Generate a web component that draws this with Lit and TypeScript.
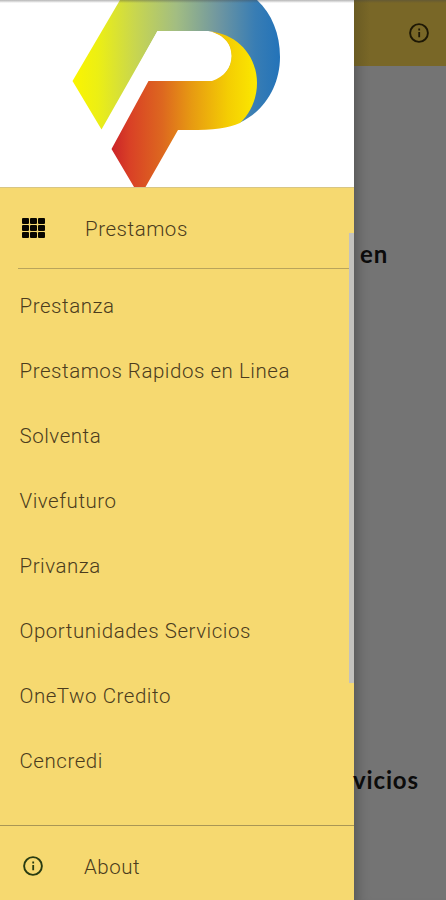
import { LitElement, html, css, svg } from "lit";
import { customElement, property } from "lit/decorators.js";

const LENDERS = [
  "Prestanza",
  "Prestamos Rapidos en Linea",
  "Solventa",
  "Vivefuturo",
  "Privanza",
  "Oportunidades Servicios",
  "OneTwo Credito",
  "Cencredi",
];

@customElement("info-icon")
export class InfoIcon extends LitElement {
  static styles = css`
    :host { display: block; width: 20px; height: 20px; }
    .icon { display: block; }
  `;
  render() {
    return html`<svg class="icon" width="20" height="20" viewBox="0 0 20 20" fill="none" stroke="currentColor">
      <circle cx="10" cy="10" r="8.9" stroke-width="1.9" />
      <path d="M10.200 9v5.2M10.200 5.6v1.9" stroke-width="1.8" />
    </svg>`;
  }
}

@customElement("brand-logo")
export class BrandLogo extends LitElement {
  static styles = css`
    :host { display: block; }
    .art { display: block; }
  `;
  render() {
    return html`<svg class="art" width="354" height="187" viewBox="0 0 354 187">
      ${svg`
      <defs>
        <linearGradient id="cool" gradientUnits="userSpaceOnUse" x1="73" y1="0" x2="280" y2="0">
          <stop offset="0" stop-color="#fbf500" />
          <stop offset="0.12" stop-color="#ecef14" />
          <stop offset="0.3" stop-color="#c8d64f" />
          <stop offset="0.5" stop-color="#a2bd82" />
          <stop offset="0.7" stop-color="#7097a0" />
          <stop offset="0.88" stop-color="#387db4" />
          <stop offset="1" stop-color="#2373b9" />
        </linearGradient>
        <linearGradient id="warm" gradientUnits="userSpaceOnUse" x1="112" y1="0" x2="257" y2="0">
          <stop offset="0" stop-color="#cb2428" />
          <stop offset="0.12" stop-color="#d94026" />
          <stop offset="0.35" stop-color="#dd681f" />
          <stop offset="0.55" stop-color="#e79a12" />
          <stop offset="0.8" stop-color="#f4cd03" />
          <stop offset="1" stop-color="#fbe900" />
        </linearGradient>
      </defs>
      <path fill="url(#cool)" d="M120 0H257C272 14 280 34 280 57C280 86 264 112 239 123L222 60L208 31H157.500L101.500 129.500L72.500 81Z" />
      <path fill="#fff" d="M157.500 31H208C223 33 232 43 232 56C232 68 223 78 212 82H148L125 90Z" />
      <path fill="url(#warm)" d="M208 31C239 34 257 57 257 83C257 98 251 113 240 123C227 129 210 130.500 178 130L145.500 187H134L111.500 149L148.500 81H212C224 77 231.500 68 231.500 56C231.500 42 222 34 208 31Z" />`}
    </svg>`;
  }
}

@customElement("drawer-menu")
export class DrawerMenu extends LitElement {
  @property({ attribute: false }) items: string[] = [];

  static styles = css`
    :host {
      display: flex;
      flex-direction: column;
      width: 354px;
      height: 900px;
      background: #f6d970;
      color: #4b3c1d;
      font: 300 20.5px/24px Roboto, sans-serif;
      letter-spacing: 0.540px;
    }
    .banner { height: 187px; background: #fff; flex: none; }
    .row { display: flex; align-items: center; box-sizing: border-box; }
    .head { height: 81px; padding: 1px 0 0 21px; border-top: 1px solid #d8c684; }
    .about { height: 75px; padding: 7px 0 0 23px; border-top: 1px solid #a99655; }
    .about info-icon { color: #293c12; margin: -2px 41px 0 0; }
    .grid { display: grid; grid-template: repeat(3, 6px) / repeat(3, 7px); gap: 1px; margin: -1px 40px 0 1px; }
    .cell { background: #080600; border-radius: 1px; }
    .rule { height: 1px; margin-left: 18px; background: #b9a45b; }
    .list { list-style: none; margin: 0; padding: 4px 0 0; flex: 1; }
    .item { height: 65.100px; padding-left: 19.500px; }
  `;
  render() {
    return html`
      <div class="banner"><brand-logo></brand-logo></div>
      <div class="row head">
        <span class="grid">${Array.from({ length: 9 }, () => html`<i class="cell"></i>`)}</span>
        <span>Prestamos</span>
      </div>
      <div class="rule"></div>
      <ul class="list">
        ${this.items.map((name) => html`<li class="row item">${name}</li>`)}
      </ul>
      <div class="row about"><info-icon></info-icon><span>About</span></div>
    `;
  }
}

@customElement("app-root")
export class AppRoot extends LitElement {
  static styles = css`
    :host { display: block; }
    .screen { display: flex; position: relative; width: 446px; height: 900px; overflow: hidden; background: #747474; }
    .screen::before { content: ""; position: absolute; z-index: 4; inset: 0 0 auto; height: 3px; background: linear-gradient(rgba(70, 70, 70, 0.4), rgba(70, 70, 70, 0)); }
    .thumb { position: absolute; left: 349px; top: 233px; width: 5px; height: 450px; background: #c3c2be; }
    .page { flex: 1; min-width: 0; display: flex; flex-direction: column; color: #0b0b0b; font: 700 24px/30px Lato, sans-serif; letter-spacing: 0.850px; box-shadow: inset 14px 0 14px -12px rgba(0, 0, 0, 0.3); }
    .bar { height: 66px; box-sizing: border-box; padding: 23px 17px 0 0; display: flex; justify-content: flex-end; background: linear-gradient(90deg, #6a5b23, #796727 16px); color: #1e1805; }
    .first { margin: 173px 0 0 6px; }
    .second { margin: 496px 0 0 -1px; }
  `;
  render() {
    return html`
      <div class="screen">
        <drawer-menu .items=${LENDERS}></drawer-menu>
        <main class="page">
          <header class="bar"><info-icon></info-icon></header>
          <div class="first">en</div>
          <div class="second">vicios</div>
        </main>
        <div class="thumb"></div>
      </div>
    `;
  }
}
